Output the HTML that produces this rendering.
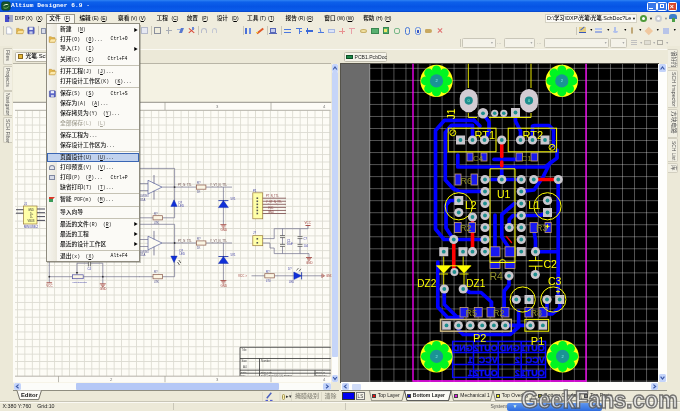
<!DOCTYPE html>
<html><head><meta charset="utf-8"><title>Altium Designer 6.9</title><style>
*{margin:0;padding:0;box-sizing:border-box}
html,body{width:680px;height:411px;overflow:hidden;background:#ECE9D8;font-family:"Liberation Sans","Noto Sans CJK SC",sans-serif;}
body{position:relative;filter:blur(0.3px)}
.a{position:absolute}
.t{position:absolute;white-space:nowrap;font-size:5.7px;line-height:7px;color:#000;font-weight:500}
.mi{position:absolute;left:60px;white-space:nowrap;font-size:5.8px;line-height:8px;color:#000;height:8px;font-weight:500}
.sc{position:absolute;right:0;white-space:nowrap;font-size:5.6px;line-height:8px;color:#111}
.l{font-size:4.9px}
.m{font-family:'Liberation Mono',monospace;font-size:4.72px}
.sep{position:absolute;left:58px;width:80px;height:1px;background:#C5C2B4}
.vt{position:absolute;white-space:nowrap;font-size:5.2px;line-height:7px;color:#555;transform-origin:0 0;transform:rotate(90deg)}
.tb{position:absolute;width:6px;height:7px;border-radius:1px}
svg{position:absolute;left:0;top:0}
</style></head><body>
<div class="a" style="left:0;top:0;width:680px;height:12px;background:linear-gradient(#2F84F3 0,#0D60EA 17%,#0654E4 55%,#0B5CEA 86%,#0843C4 100%)"></div>
<svg width="680" height="411" viewBox="0 0 680 411"><rect x="1.6" y="1.8" width="8.6" height="8.4" rx="1.8" fill="#17552A" stroke="#0C3316" stroke-width="0.5"/><path d="M3 6.6C4.2 3.6 7.4 3.4 8.8 5.4C7.4 4.8 5 5 3 6.6Z" fill="#F4F8D8"/><path d="M3.6 7.8C5.4 8.8 7.6 8.2 8.8 6.4" stroke="#8CCB6A" stroke-width="0.8" fill="none"/></svg>
<div class="t" style="left:11px;top:2px;color:#fff;font-family:'Liberation Mono',monospace;font-weight:bold;font-size:6.2px;letter-spacing:0.05px;line-height:8px">Altium Designer 6.9 -</div>
<div class="a" style="left:647px;top:1.5px;width:9.5px;height:9px;border-radius:1.5px;background:#3A78E8;border:0.6px solid #fff"></div>
<div class="a" style="left:657px;top:1.5px;width:9.5px;height:9px;border-radius:1.5px;background:#3A78E8;border:0.6px solid #fff"></div>
<div class="a" style="left:667.5px;top:1.5px;width:9.5px;height:9px;border-radius:1.5px;background:#D8482C;border:0.6px solid #fff"></div>
<div class="a" style="left:649px;top:7.5px;width:4px;height:1.5px;background:#fff"></div>
<div class="a" style="left:659.5px;top:3.5px;width:4.5px;height:4.5px;border:1px solid #fff"></div>
<div class="t" style="left:669.8px;top:1.5px;color:#fff;font-weight:bold;font-size:7px;line-height:9px">×</div>
<div class="a" style="left:0;top:12px;width:680px;height:12px;background:#EFECDD"></div>
<div class="a" style="left:4.9px;top:14.8px;width:4px;height:6.8px;background:#454CCB"></div><div class="a" style="left:8.9px;top:14.8px;width:3.9px;height:6.8px;background:#A3A9C6"></div><div class="a" style="left:8.3px;top:16.6px;width:0;height:0;border-left:2.2px solid #20246A;border-top:1.6px solid transparent;border-bottom:1.6px solid transparent"></div>
<div class="a" style="left:46px;top:13.5px;width:29px;height:10px;background:#F8F7F1;border:0.7px solid #9A978A;border-bottom:none"></div>
<div class="t" style="left:14.7px;top:14.5px"><span class="l">DXP&nbsp;(X)</span></div>
<div class="t" style="left:36px;top:14.5px"><span class="l">(<u>X</u>)</span></div>
<div class="t" style="left:49.3px;top:14.5px">文件</div>
<div class="t" style="left:64px;top:14.5px"><span class="l">(<u>F</u>)</span></div>
<div class="t" style="left:79.4px;top:14.5px">编辑<span class="l">&nbsp;(E)</span></div>
<div class="t" style="left:100.5px;top:14.5px"><span class="l">(<u>E</u>)</span></div>
<div class="t" style="left:118px;top:14.5px">察看<span class="l">&nbsp;(V)</span></div>
<div class="t" style="left:139px;top:14.5px"><span class="l">(<u>V</u>)</span></div>
<div class="t" style="left:156.5px;top:14.5px">工程</div>
<div class="t" style="left:171.5px;top:14.5px"><span class="l">(<u>C</u>)</span></div>
<div class="t" style="left:186.7px;top:14.5px">放置</div>
<div class="t" style="left:201.7px;top:14.5px"><span class="l">(<u>P</u>)</span></div>
<div class="t" style="left:216.7px;top:14.5px">设计</div>
<div class="t" style="left:231.7px;top:14.5px"><span class="l">(<u>D</u>)</span></div>
<div class="t" style="left:247px;top:14.5px">工具<span class="l">&nbsp;(T)</span></div>
<div class="t" style="left:268px;top:14.5px"><span class="l">(<u>T</u>)</span></div>
<div class="t" style="left:285.5px;top:14.5px">报告<span class="l">&nbsp;(R)</span></div>
<div class="t" style="left:306.5px;top:14.5px"><span class="l">(<u>R</u>)</span></div>
<div class="t" style="left:324.3px;top:14.5px">窗口<span class="l">&nbsp;(W)</span></div>
<div class="t" style="left:346px;top:14.5px"><span class="l">(<u>W</u>)</span></div>
<div class="t" style="left:363.2px;top:14.5px">帮助<span class="l">&nbsp;(H)</span></div>
<div class="t" style="left:384.5px;top:14.5px"><span class="l">(<u>H</u>)</span></div>
<div class="a" style="left:545px;top:13.5px;width:92px;height:9.5px;background:#FBFAF5;border:0.6px solid #D5D2C3"></div>
<div class="t" style="left:547px;top:14.8px;font-size:5.4px">D:\学习\DXP\光笔\光笔.SchDoc?Le</div>
<div class="t" style="left:632px;top:15px;font-size:4px">▼</div>
<div class="a" style="left:640px;top:14.5px;width:7px;height:7px;border-radius:50%;background:#fff;border:2px solid #4E9A3A"></div><div class="t" style="left:649px;top:15px;font-size:4px">▼</div>
<div class="a" style="left:655px;top:14.5px;width:7px;height:7px;border-radius:50%;background:#fff;border:2px solid #C9CCD2"></div><div class="t" style="left:664px;top:15px;font-size:4px;color:#888">▼</div>
<div class="a" style="left:669px;top:14px;width:8px;height:5px;background:#3D7EC8;border-radius:3px 3px 0 0"></div><div class="a" style="left:671.5px;top:18px;width:3px;height:4px;background:#4AA046"></div>
<div class="a" style="left:0;top:24px;width:680px;height:25px;background:#EFECDD"></div>
<div class="a" style="left:2.5px;top:26px;width:1px;height:9px;background:#C9C6B8"></div>
<div class="a" style="left:576px;top:26.5px;width:1px;height:8px;background:#C9C6B8"></div>
<div class="a" style="left:460px;top:39px;width:1px;height:8px;background:#C9C6B8"></div>
<svg width="680" height="411" viewBox="0 0 680 411"><path d="M6.6 27H10.2L11.9 28.8V34H6.6Z" fill="#FDFDFE" stroke="#98A2BA" stroke-width="0.6"/><path d="M10.2 27V28.8H11.9" fill="#DDE3F0" stroke="#98A2BA" stroke-width="0.4"/><path d="M16.6 33.6V28.4H19L19.8 29.3H22.8V33.6Z" fill="#E8B94A" stroke="#B58A30" stroke-width="0.5"/><path d="M16.6 33.6L18.2 30.4H24L22.8 33.6Z" fill="#FBE29A" stroke="#C59A3A" stroke-width="0.5"/><rect x="27.8" y="27.2" width="6.4" height="6.6" rx="0.6" fill="#5560C4" stroke="#3A4296" stroke-width="0.5"/><rect x="29.2" y="27.5" width="3.6" height="2.4" fill="#F2F4FB"/><rect x="29.4" y="31.4" width="3.2" height="2.3" fill="#C9CEEA"/></svg>
<div class="a" style="left:38px;top:26px;width:1px;height:9px;background:#C9C6B8"></div>
<div class="a" style="left:40.6px;top:27.5px;width:5.5px;height:6px;background:#D8DCE8;border:0.5px solid #8890A8"></div>
<div class="a" style="left:121.8px;top:27px;width:5.5px;height:7px;background:#E4E8F4;border:0.5px solid #A0A8C0"></div>
<div class="a" style="left:130.6px;top:27.5px;width:7px;height:6.5px;background:#EAC868;border:0.5px solid #6A83C0"></div>
<div class="a" style="left:133px;top:29px;width:4.5px;height:4px;background:#F6F8FF;border:0.4px solid #7A8AC0"></div>
<div class="a" style="left:141px;top:27px;width:7px;height:7px;background:#E6E8F2;border:0.5px solid #B5BACB"></div>
<div class="a" style="left:151.4px;top:26px;width:1px;height:9px;background:#C9C6B8"></div>
<div class="a" style="left:154.4px;top:27px;width:7px;height:7px;background:transparent;border:0.7px solid #8A8F9C"></div>
<div class="a" style="left:168.3px;top:27px;width:0.8px;height:7px;background:#A8ACB5;"></div>
<div class="a" style="left:165.5px;top:30.2px;width:6.5px;height:0.8px;background:#A8ACB5;"></div>
<div class="a" style="left:176.5px;top:29px;width:6px;height:1px;background:#A0B4E0;"></div>
<div class="a" style="left:180px;top:27.5px;width:2.5px;height:5px;background:#5878D0;transform:skewX(-20deg)"></div>
<div class="a" style="left:187.5px;top:30px;width:7px;height:1.2px;background:#D84838;transform:rotate(40deg)"></div>
<div class="a" style="left:187.5px;top:30px;width:7px;height:1.2px;background:#D84838;transform:rotate(-40deg)"></div>
<div class="a" style="left:192px;top:27px;width:2px;height:3px;background:#6A8AD8;"></div>
<div class="a" style="left:197.6px;top:26px;width:1px;height:9px;background:#C9C6B8"></div>
<div class="a" style="left:201px;top:28px;width:5.5px;height:4.5px;background:transparent;border:1px solid #B8BCCC;border-bottom:none;border-radius:3px 3px 0 0"></div>
<div class="a" style="left:211.8px;top:28px;width:5.5px;height:4.5px;background:transparent;border:1px solid #C4C8D4;border-bottom:none;border-radius:3px 3px 0 0"></div>
<div class="a" style="left:242.6px;top:26px;width:1px;height:9px;background:#C9C6B8"></div>
<div class="a" style="left:245px;top:27.5px;width:2px;height:6px;background:#4A70D8;"></div>
<div class="a" style="left:248.5px;top:27.5px;width:2px;height:6px;background:#6E90E4;"></div>
<div class="a" style="left:255.5px;top:30px;width:8px;height:1.6px;background:#E05828;transform:rotate(-38deg)"></div>
<div class="a" style="left:255.5px;top:32.3px;width:2.5px;height:1.2px;background:#F0C838;"></div>
<div class="a" style="left:266.5px;top:26px;width:1px;height:9px;background:#C9C6B8"></div>
<div class="a" style="left:269.5px;top:28px;width:6px;height:5px;background:#C4CCEC;border:0.6px solid #5868B8"></div>
<div class="a" style="left:269px;top:33px;width:7.5px;height:1px;background:#5868B8;"></div>
<div class="a" style="left:281px;top:26px;width:1px;height:9px;background:#C9C6B8"></div>
<div class="a" style="left:284px;top:29px;width:7px;height:1.1px;background:#4A78E0;"></div>
<div class="a" style="left:284px;top:31.5px;width:7px;height:1.1px;background:#4A78E0;"></div>
<div class="a" style="left:295.6px;top:28px;width:6px;height:1.2px;background:#4A78E0;"></div>
<div class="a" style="left:298.5px;top:28px;width:1.2px;height:6px;background:#4A78E0;"></div>
<div class="a" style="left:299px;top:30.5px;width:3px;height:1px;background:#4A78E0;"></div>
<div class="a" style="left:306px;top:30px;width:7px;height:1.6px;background:#3A68D8;"></div>
<div class="a" style="left:307px;top:27.5px;width:1.2px;height:6px;background:#3A68D8;"></div>
<div class="a" style="left:317.6px;top:32px;width:6px;height:1.2px;background:#4A78E0;"></div>
<div class="a" style="left:319.5px;top:27.5px;width:1.2px;height:5px;background:#4A78E0;transform:skewX(15deg)"></div>
<div class="a" style="left:328px;top:28.5px;width:7px;height:4.5px;background:#DCE4F8;border:0.5px solid #A8B8E4"></div>
<div class="a" style="left:341.5px;top:28px;width:1.2px;height:6px;background:#E89090;"></div>
<div class="a" style="left:338.8px;top:30.5px;width:6.5px;height:1.2px;background:#E89090;"></div>
<div class="a" style="left:348.5px;top:28px;width:6.2px;height:1.1px;background:#E8A0A8;"></div>
<div class="a" style="left:351px;top:28px;width:1.1px;height:6px;background:#E8A0A8;"></div>
<div class="a" style="left:360px;top:28.5px;width:7px;height:4.5px;background:#F0E0A0;border-radius:50%;border:0.5px solid #C8B068"></div>
<div class="a" style="left:371px;top:27.6px;width:7.6px;height:6px;background:#58B070;border:0.5px solid #3A8850"></div>
<div class="a" style="left:382.8px;top:27.2px;width:6.4px;height:7px;background:#58B070;border:0.5px solid #3A8850"></div>
<div class="a" style="left:384.3px;top:28.8px;width:2.8px;height:2.8px;background:#F0E868;"></div>
<div class="a" style="left:393.5px;top:28px;width:6px;height:5.5px;background:transparent;border:0.7px solid #78B888;border-radius:2px"></div>
<div class="a" style="left:404.5px;top:27px;width:5px;height:8px;background:transparent;border:1px solid #4878D8;border-radius:2.5px"></div>
<div class="a" style="left:415px;top:27px;width:5.5px;height:8px;background:transparent;border:1px solid #6890E0;border-radius:2.5px"></div>
<div class="a" style="left:416.7px;top:30px;width:2px;height:3px;background:#3858C8;"></div>
<div class="a" style="left:425.3px;top:28.5px;width:7px;height:4.5px;background:#C8A860;border-radius:2px 3px 3px 2px"></div>
<div class="a" style="left:437px;top:30.2px;width:6px;height:1px;background:#E07070;transform:rotate(45deg)"></div>
<div class="a" style="left:437px;top:30.2px;width:6px;height:1px;background:#E07070;transform:rotate(-45deg)"></div>
<div class="a" style="left:578.5px;top:27px;width:7px;height:6px;background:#E8D080;border-bottom:1.2px solid #3858B8"></div>
<div class="a" style="left:580px;top:27.5px;width:5px;height:1.2px;background:#4868C8;transform:rotate(-40deg)"></div>
<div class="a" style="left:595px;top:28px;width:6.5px;height:2px;background:#B8C8F0;"></div>
<div class="a" style="left:595px;top:31px;width:6.5px;height:2px;background:#DCE4F8;border:0.4px solid #A0B0E0"></div>
<div class="a" style="left:614px;top:27px;width:2px;height:5px;background:#B0C0EC;"></div>
<div class="a" style="left:612.5px;top:31px;width:5px;height:2px;background:#B0C0EC;border-radius:0 0 3px 3px"></div>
<div class="a" style="left:631px;top:27px;width:2px;height:7px;background:#E8D8B0;border:0.4px solid #C0A878;border-radius:1px"></div>
<div class="a" style="left:645.5px;top:28px;width:5.5px;height:5.5px;background:#F0C8A0;transform:rotate(45deg)"></div>
<div class="a" style="left:662.5px;top:27.5px;width:6.5px;height:6.5px;background:#B8C4E8;"></div>
<div class="t" style="left:589.5px;top:27px;font-size:3.6px">▼</div>
<div class="t" style="left:606.5px;top:27px;font-size:3.6px">▼</div>
<div class="t" style="left:623.5px;top:27px;font-size:3.6px">▼</div>
<div class="t" style="left:638.5px;top:27px;font-size:3.6px">▼</div>
<div class="t" style="left:656px;top:27px;font-size:3.6px">▼</div>
<div class="t" style="left:673px;top:27px;font-size:3.6px">▼</div>
<div class="a" style="left:462px;top:38px;width:33.8px;height:9.5px;background:#F4F2E9;border:0.7px solid #C9C6B8;border-radius:1.5px"></div>
<div class="t" style="left:490.3px;top:39.5px;font-size:3.4px;color:#AAA">▼</div>
<div class="a" style="left:504.2px;top:38px;width:31px;height:9.5px;background:#F4F2E9;border:0.7px solid #C9C6B8;border-radius:1.5px"></div>
<div class="t" style="left:529.7px;top:39.5px;font-size:3.4px;color:#AAA">▼</div>
<div class="a" style="left:544px;top:38px;width:65.4px;height:9.5px;background:#F4F2E9;border:0.7px solid #C9C6B8;border-radius:1.5px"></div>
<div class="t" style="left:603.9px;top:39.5px;font-size:3.4px;color:#AAA">▼</div>
<div class="a" style="left:610.2px;top:38px;width:17px;height:9.5px;background:#F4F2E9;border:0.7px solid #C9C6B8;border-radius:1.5px"></div>
<div class="t" style="left:621.7px;top:39.5px;font-size:3.4px;color:#AAA">▼</div>
<div class="t" style="left:497px;top:38.5px;font-size:5px;color:#999">...</div>
<div class="t" style="left:537px;top:38.5px;font-size:5px;color:#999">...</div>
<div class="a" style="left:631px;top:40px;width:6px;height:1px;background:#C0C0C0;"></div>
<div class="a" style="left:631px;top:42px;width:6px;height:1px;background:#C0C0C0;"></div>
<div class="a" style="left:631px;top:44px;width:6px;height:1px;background:#C0C0C0;"></div>
<div class="a" style="left:644px;top:40px;width:7px;height:5px;background:#E0DED4;border:0.5px solid #C8C5B8"></div>
<div class="a" style="left:656.5px;top:40px;width:6px;height:5px;background:transparent;border:0.7px dashed #B0AEA4"></div>
<div class="t" style="left:639.5px;top:39.5px;font-size:3.4px;color:#AAA">▼</div>
<div class="t" style="left:652.5px;top:39.5px;font-size:3.4px;color:#AAA">▼</div>
<div class="t" style="left:665.5px;top:39.5px;font-size:3.4px;color:#AAA">▼</div>
<div class="a" style="left:0;top:48.6px;width:680px;height:0.8px;background:#CFCCBD"></div><div class="a" style="left:0;top:49.4px;width:680px;height:0.8px;background:#FAF9F3"></div>
<div class="a" style="left:0;top:50px;width:680px;height:361px;background:#ECE9D8"></div>
<!--PANES--><div class="a" style="left:0;top:46px;width:12.5px;height:345px;background:#ECE9D8"></div>
<div class="a" style="left:2.5px;top:47.5px;width:9.5px;height:17.5px;background:#F2F0E4;border:0.6px solid #CECBBC;border-right:none;border-radius:2px 0 0 2px"></div>
<div class="vt" style="left:10.5px;top:49.7px">Files</div>
<div class="a" style="left:2.5px;top:66px;width:9.5px;height:24.5px;background:#F2F0E4;border:0.6px solid #CECBBC;border-right:none;border-radius:2px 0 0 2px"></div>
<div class="vt" style="left:10.5px;top:68.2px">Projects</div>
<div class="a" style="left:2.5px;top:91px;width:9.5px;height:25px;background:#F2F0E4;border:0.6px solid #CECBBC;border-right:none;border-radius:2px 0 0 2px"></div>
<div class="vt" style="left:10.5px;top:93.2px">Navigator</div>
<div class="a" style="left:2.5px;top:116.5px;width:9.5px;height:26.5px;background:#F2F0E4;border:0.6px solid #CECBBC;border-right:none;border-radius:2px 0 0 2px"></div>
<div class="vt" style="left:10.5px;top:118.7px">SCH Filter</div>
<div class="a" style="left:14.5px;top:52px;width:60px;height:9.5px;background:#FCFBF7;border:0.6px solid #B9B6A7;border-radius:1.5px"></div>
<div class="a" style="left:17.5px;top:54px;width:5.5px;height:5px;background:#E8B838;border:0.6px solid #8A6A20"></div>
<div class="t" style="left:25.5px;top:53.3px;font-size:5.8px">光笔.SchDoc</div>
<div class="a" style="left:12.6px;top:63px;width:318.9px;height:319.5px;background:#F4F2E3;border-top:0.8px solid #B8B5A6"></div>
<svg width="680" height="411" viewBox="0 0 680 411" style="font-family:'Liberation Sans',sans-serif">
<defs><clipPath id="cs"><rect x="12.6" y="63.8" width="318.9" height="318.7"/></clipPath>
<pattern id="gs" x="16.95" y="109.8" width="7.44" height="7.39" patternUnits="userSpaceOnUse"><rect width="7.44" height="7.39" fill="#FDFCF6"/><path d="M0.45 0V7.5M0 0.45H7.5" stroke="#DCDBD2" stroke-width="0.9" fill="none"/></pattern></defs>
<g clip-path="url(#cs)">
<rect x="13" y="102" width="318.5" height="280.5" fill="#FDFCF7"/>
<rect x="15" y="110.2" width="315.2" height="266.1" fill="url(#gs)"/>
<path d="M13 102.3H331.5" stroke="#77756C" stroke-width="0.8" fill="none"/><path d="M15 110.3H330.4M15 376.2H330.4" stroke="#A9A79E" stroke-width="0.8" fill="none"/>
<path d="M330.2 110V376" stroke="#B5B3AA" stroke-width="0.6" fill="none"/>
<path d="M58.5 102.3V110M165 102.3V110M271 102.3V110M58.5 376.2V382.4M165 376.2V382.4M271 376.2V382.4" stroke="#8E8C82" stroke-width="0.6"/>
<text x="110" y="107.6" font-size="4.2" fill="#777">2</text>
<text x="216" y="107.6" font-size="4.2" fill="#777">3</text>
<text x="323" y="107.6" font-size="4.2" fill="#777">4</text>
<text x="110" y="381.3" font-size="4.2" fill="#777">2</text>
<text x="216" y="381.3" font-size="4.2" fill="#777">3</text>
<text x="323" y="381.3" font-size="4.2" fill="#777">4</text>
<rect x="23.4" y="206" width="13.6" height="18" fill="#FFFFA8" stroke="#9A7A3A" stroke-width="0.7"/>
<path d="M16 209.7H23.4M16 213.2H23.4" stroke="#4A4A5A" stroke-width="1" fill="none"/>
<path d="M37 209H45M37 212.7H45M37 216.6H45M37 220.4H45" stroke="#4A4A5A" stroke-width="1" fill="none"/>
<text x="28" y="210.7" font-size="2.6" fill="#333">GND</text>
<text x="30" y="214.5" font-size="2.6" fill="#333">D+</text>
<text x="30" y="218" font-size="2.6" fill="#333">D-</text>
<text x="27.5" y="221.8" font-size="2.6" fill="#333">VBUS</text>
<text x="24" y="228.3" font-size="2.8" fill="#3838A0">MINIUSB-2</text>
<text x="24" y="204.8" font-size="2.8" fill="#3838A0">J1</text>
<path d="M139 168.4H174.6V217.8H139" stroke="#70708C" stroke-width="0.7" fill="none"/>
<path d="M139 183.6H148M139 190.6H148" stroke="#70708C" stroke-width="0.7" fill="none"/>
<path d="M148 180.3L162 187.1L148 194Z" fill="#FCFBF2" stroke="#6068A0" stroke-width="0.75"/>
<path d="M154 175V183.5M154 190.8V199.5" stroke="#55557A" stroke-width="0.7" fill="none"/>
<path d="M162 187.1H196.4M205.8 187.1H232" stroke="#70708C" stroke-width="0.7" fill="none"/>
<rect x="196.4" y="185.0" width="9.5" height="4.2" fill="#FBF6E4" stroke="#8A5A4A" stroke-width="0.7"/>
<rect x="153" y="215.70000000000002" width="9.5" height="4.2" fill="#FBF6E4" stroke="#8A5A4A" stroke-width="0.7"/>
<text x="178" y="185.8" font-size="2.8" fill="#6A4A4A">PT_N_TTL</text>
<text x="210" y="185.8" font-size="2.8" fill="#6A4A4A">Y_VT_N_TTL</text>
<text x="197" y="183.6" font-size="2.8" fill="#4A4A8A">R?</text>
<text x="197" y="193" font-size="2.8" fill="#4A4A8A">1K</text>
<text x="140" y="197" font-size="2.8" fill="#4A4A8A">LM393</text>
<text x="140" y="200.5" font-size="2.8" fill="#4A4A8A">U1A</text>
<text x="154" y="214.5" font-size="2.8" fill="#4A4A8A">R?</text>
<text x="154" y="223.6" font-size="2.8" fill="#4A4A8A">47K</text>
<circle cx="174.6" cy="187.1" r="0.9" fill="#333"/>
<path d="M139 224.3H174.6V276.7H139" stroke="#70708C" stroke-width="0.7" fill="none"/>
<path d="M139 239.5H148M139 246.5H148" stroke="#70708C" stroke-width="0.7" fill="none"/>
<path d="M148 236.20000000000002L162 243.0L148 249.9Z" fill="#FCFBF2" stroke="#6068A0" stroke-width="0.75"/>
<path d="M154 230.9V239.4M154 246.70000000000002V255.4" stroke="#55557A" stroke-width="0.7" fill="none"/>
<path d="M162 243.0H196.4M205.8 243.0H232" stroke="#70708C" stroke-width="0.7" fill="none"/>
<rect x="196.4" y="240.9" width="9.5" height="4.2" fill="#FBF6E4" stroke="#8A5A4A" stroke-width="0.7"/>
<rect x="153" y="274.59999999999997" width="9.5" height="4.2" fill="#FBF6E4" stroke="#8A5A4A" stroke-width="0.7"/>
<text x="178" y="241.70000000000002" font-size="2.8" fill="#6A4A4A">PT_N_TTL</text>
<text x="210" y="241.70000000000002" font-size="2.8" fill="#6A4A4A">Y_VT_N_TTL</text>
<text x="197" y="239.5" font-size="2.8" fill="#4A4A8A">R?</text>
<text x="197" y="248.9" font-size="2.8" fill="#4A4A8A">1K</text>
<text x="140" y="252.9" font-size="2.8" fill="#4A4A8A">LM393</text>
<text x="140" y="256.4" font-size="2.8" fill="#4A4A8A">U1A</text>
<text x="154" y="273.4" font-size="2.8" fill="#4A4A8A">R?</text>
<text x="154" y="282.5" font-size="2.8" fill="#4A4A8A">47K</text>
<circle cx="174.6" cy="243.0" r="0.9" fill="#333"/>
<path d="M49.3 255V282.8M49.3 276.7H72.5M83.2 276.7H139.5M77 263.2H88.4M90.4 263.2H102.8V283.8M77 263.2V272" stroke="#70708C" stroke-width="0.7" fill="none"/>
<path d="M88.4 260V266.4M90.4 260V266.4" stroke="#444" stroke-width="0.7" fill="none"/>
<rect x="72.5" y="274.8" width="10.7" height="3.9" fill="#FBF6E4" stroke="#4A4AA0" stroke-width="0.7"/>
<path d="M75.8 272L77 274.6L78.2 272Z" fill="#333"/>
<text x="72.5" y="282.6" font-size="2.4" fill="#3838A0">potentiometer</text>
<text x="87.6" y="270.2" font-size="2.8" fill="#3838A0">C4</text>
<path d="M99.8 283.8H105.8M100.8 285.1H104.8M101.8 286.40000000000003H103.8" stroke="#A0403A" stroke-width="0.8" fill="none"/>
<text x="99.8" y="290.1" font-size="3" fill="#A0403A">GND</text>
<path d="M46.5 282.8H52.1" stroke="#A0403A" stroke-width="0.9" fill="none"/>
<text x="46.3" y="287.2" font-size="3" fill="#A0403A">VCC</text>
<circle cx="49.3" cy="276.7" r="0.9" fill="#333"/><circle cx="102.8" cy="276.7" r="0.9" fill="#333"/>
<path d="M174 199.8L170.8 206.4H177.2Z" fill="#1030D8" stroke="#0820A0" stroke-width="0.4"/>
<text x="178.5" y="203.5" font-size="2.8" fill="#3838A0">D?</text>
<text x="178.5" y="207" font-size="2.8" fill="#3838A0">LED</text>
<path d="M174 262.6L170.8 256.1H177.2Z" fill="#1030D8" stroke="#0820A0" stroke-width="0.4"/>
<text x="179.5" y="251.8" font-size="2.8" fill="#3838A0">D?</text>
<text x="179.5" y="255.3" font-size="2.8" fill="#3838A0">LED</text>
<path d="M177.5 262L179.5 265M178.8 260L180.8 263" stroke="#222" stroke-width="0.7" fill="none"/>
<path d="M223.4 187.1V224.6" stroke="#70708C" stroke-width="0.7" fill="none"/>
<path d="M223.4 200.6L218.4 207.6H228.4Z" fill="#1030D8" stroke="#0820A0" stroke-width="0.4"/>
<path d="M218.4 200.6H228.4" stroke="#0820A0" stroke-width="0.8" fill="none"/>
<path d="M220.4 224.6H226.4M221.4 225.9H225.4M222.4 227.2H224.4" stroke="#A0403A" stroke-width="0.8" fill="none"/>
<text x="220.4" y="230.9" font-size="3" fill="#A0403A">GND</text>
<text x="230.5" y="200" font-size="2.8" fill="#3838A0">5V1</text>
<path d="M223.4 243.0V280.5" stroke="#70708C" stroke-width="0.7" fill="none"/>
<path d="M223.4 256.5L218.4 263.5H228.4Z" fill="#1030D8" stroke="#0820A0" stroke-width="0.4"/>
<path d="M218.4 256.5H228.4" stroke="#0820A0" stroke-width="0.8" fill="none"/>
<path d="M220.4 280.5H226.4M221.4 281.8H225.4M222.4 283.1H224.4" stroke="#A0403A" stroke-width="0.8" fill="none"/>
<text x="220.4" y="286.8" font-size="3" fill="#A0403A">GND</text>
<text x="230.5" y="255.9" font-size="2.8" fill="#3838A0">5V1</text>
<rect x="252.8" y="192.8" width="9.9" height="26" fill="#FFFFA8" stroke="#9A7A3A" stroke-width="0.7"/>
<path d="M262.7 198.2H286" stroke="#7A4A4A" stroke-width="0.8" fill="none"/>
<rect x="256.5" y="197.39999999999998" width="1.6" height="1.6" fill="#555"/>
<path d="M262.7 201.26H286" stroke="#7A4A4A" stroke-width="0.8" fill="none"/>
<rect x="256.5" y="200.45999999999998" width="1.6" height="1.6" fill="#555"/>
<path d="M262.7 204.32H286" stroke="#7A4A4A" stroke-width="0.8" fill="none"/>
<rect x="256.5" y="203.51999999999998" width="1.6" height="1.6" fill="#555"/>
<path d="M262.7 207.38H286" stroke="#7A4A4A" stroke-width="0.8" fill="none"/>
<rect x="256.5" y="206.57999999999998" width="1.6" height="1.6" fill="#555"/>
<path d="M262.7 210.44H286" stroke="#7A4A4A" stroke-width="0.8" fill="none"/>
<rect x="256.5" y="209.64" width="1.6" height="1.6" fill="#555"/>
<path d="M262.7 213.5H286" stroke="#7A4A4A" stroke-width="0.8" fill="none"/>
<rect x="256.5" y="212.7" width="1.6" height="1.6" fill="#555"/>
<text x="266" y="197" font-size="2.6" fill="#8A3A3A">PT_N_TTL</text>
<text x="266" y="203.2" font-size="2.6" fill="#8A3A3A">Y_VT_N_TTL</text>
<text x="268" y="209.4" font-size="2.6" fill="#8A3A3A">VCC</text>
<text x="268" y="212.5" font-size="2.6" fill="#8A3A3A">GND</text>
<text x="253" y="191.5" font-size="2.8" fill="#3838A0">P1</text>
<rect x="252.8" y="235.7" width="9.9" height="10" fill="#FFFFA8" stroke="#9A7A3A" stroke-width="0.7"/>
<text x="253" y="234.4" font-size="2.8" fill="#3838A0">J?</text>
<rect x="256.5" y="238" width="1.6" height="1.6" fill="#555"/><rect x="256.5" y="242" width="1.6" height="1.6" fill="#555"/>
<path d="M262.7 238.6H274.2M262.7 243H270V248H274.2M274.2 228.7V238.6M274.2 248V253.6M274.2 228.7H308V225.5M274.2 253.6H309V257.5" stroke="#70708C" stroke-width="0.7" fill="none"/>
<path d="M282.5 228.7V235.6M282.5 237.6V244.4M282.5 246.4V253.6M300 228.7V236.6M300 238.6V244.4M300 246.4V253.6" stroke="#70708C" stroke-width="0.7" fill="none"/>
<path d="M280 235.6H285M280 237.6H285M280 244.4H285M280 246.4H285M297.5 236.6H302.5M297.5 238.6H302.5M297.5 244.4H302.5M297.5 246.4H302.5" stroke="#444" stroke-width="0.7" fill="none"/>
<path d="M305.5 225.5H310.5" stroke="#A0403A" stroke-width="0.9" fill="none"/>
<text x="304.5" y="224.2" font-size="3" fill="#A0403A">VCC</text>
<path d="M306 257.5H312M307 258.8H311M308 260.1H310" stroke="#A0403A" stroke-width="0.8" fill="none"/>
<text x="306" y="263.8" font-size="3" fill="#A0403A">GND</text>
<text x="287" y="241.5" font-size="2.8" fill="#3838A0">C1</text>
<text x="287" y="245" font-size="2.6" fill="#3838A0">10uF</text>
<text x="303.5" y="239.5" font-size="2.8" fill="#3838A0">C?</text>
<text x="303.5" y="246.5" font-size="2.6" fill="#3838A0">104</text>
<path d="M251.5 275.8H264.8M274.3 275.8H293.8M301.6 275.8H322" stroke="#70708C" stroke-width="0.7" fill="none"/>
<rect x="264.8" y="273.7" width="9.5" height="4.2" fill="#FBF6E4" stroke="#8A5A4A" stroke-width="0.7"/>
<path d="M301.6 275.8L293.8 272V279.6Z" fill="#1030D8" stroke="#0820A0" stroke-width="0.4"/>
<path d="M301.6 272.2V279.4" stroke="#0820A0" stroke-width="0.8" fill="none"/>
<path d="M296.5 270.5L298.5 268M299 271.3L301 268.8" stroke="#222" stroke-width="0.6" fill="none"/>
<text x="238" y="277" font-size="3" fill="#A0403A">VCC &gt;</text>
<path d="M322 273.5V278M323.3 274.5V277M324.6 275.3V276.3" stroke="#A0403A" stroke-width="0.8" fill="none"/>
<text x="326" y="277" font-size="3" fill="#A0403A">GND</text>
<text x="266" y="273" font-size="2.8" fill="#3838A0">R?</text>
<text x="266" y="281.7" font-size="2.6" fill="#3838A0">470</text>
<text x="288" y="269.5" font-size="2.8" fill="#3838A0">D?</text>
<text x="289" y="283.4" font-size="2.6" fill="#3838A0">LED</text>
<path d="M240 347.3H330.8M240 358.5H330.8M240 370.2H330.8M240 373.2H330.8M240 347.3V376M259.5 358.5V370.2M259.5 370.2V376M315 370.2V376" stroke="#333" stroke-width="0.8" fill="none"/>
<text x="241.5" y="350.6" font-size="2.7" fill="#444">Title</text>
<text x="241.5" y="361.6" font-size="2.7" fill="#444">Size</text>
<text x="243" y="367.8" font-size="2.9" fill="#444">A4</text>
<text x="261" y="361.6" font-size="2.7" fill="#444">Number</text>
<text x="241" y="372.6" font-size="2.4" fill="#444">Date:</text>
<text x="261" y="372.6" font-size="2.4" fill="#444">2009-8-25</text>
<text x="316" y="372.6" font-size="2.4" fill="#444">Sheet  of</text>
<text x="241" y="375.6" font-size="2.4" fill="#444">File:</text>
<text x="261" y="375.6" font-size="2.4" fill="#444">D:\学习\DXP\光笔\光笔.SchDoc</text>
<text x="316" y="375.6" font-size="2.4" fill="#444">Drawn By:</text>
</g></svg>
<div class="a" style="left:331.8px;top:63.8px;width:6.4px;height:318.7px;background:#FDFDFB"></div>
<div class="a" style="left:331.8px;top:72px;width:6.4px;height:285px;background:#C6D5F8;border-radius:1px"></div>
<div class="a" style="left:331.8px;top:64.2px;width:6.4px;height:7.6px;background:#C4D4FA;border-radius:1.5px"></div>
<div class="a" style="left:331.8px;top:374.6px;width:6.4px;height:7.6px;background:#C4D4FA;border-radius:1.5px"></div>
<svg width="680" height="411" viewBox="0 0 680 411"><path d="M333.2 69.5L335 67L336.8 69.5M333.2 377L335 379.5L336.8 377" stroke="#3C5AA8" stroke-width="1.2" fill="none"/></svg>
<div class="a" style="left:13.8px;top:382.6px;width:317.7px;height:7.6px;background:#FCFCF9"></div>
<div class="a" style="left:76px;top:382.8px;width:202.5px;height:7.2px;background:#B5C8F6;border-radius:1px"></div>
<div class="a" style="left:13.8px;top:382.8px;width:7.6px;height:7.2px;background:#C4D4FA;border-radius:1.5px"></div>
<div class="a" style="left:323.2px;top:382.8px;width:7.6px;height:7.2px;background:#C4D4FA;border-radius:1.5px"></div>
<svg width="680" height="411" viewBox="0 0 680 411"><path d="M18.6 384.6L16.4 386.4L18.6 388.2M326 384.6L328.2 386.4L326 388.2" stroke="#3C5AA8" stroke-width="1.2" fill="none"/></svg>
<div class="a" style="left:331.5px;top:382.6px;width:7px;height:8px;background:#ECE9D8"></div>
<div class="a" style="left:13px;top:390.4px;width:326px;height:0.7px;background:#8F8D80"></div>
<svg width="680" height="411" viewBox="0 0 680 411"><path d="M17 390.6L19.8 399.6H38.6L41.4 390.6" fill="#FCFBF7" stroke="#55534A" stroke-width="0.8"/></svg>
<div class="t" style="left:21px;top:391.6px;font-weight:bold;font-size:5.8px;color:#111">Editor</div>
<svg width="680" height="411" viewBox="0 0 680 411"><path d="M266.8 398.2L271.3 392.8" stroke="#4A60C0" stroke-width="1.5"/><path d="M265.5 400.4H268M270 400.4H272.5" stroke="#2838D0" stroke-width="0.9"/><path d="M262.5 392V401.5M280 392V401.5M291.5 392V401.5M321.5 392V401.5" stroke="#D5D2C2" stroke-width="0.7"/></svg>
<div class="a" style="left:282px;top:393.5px;width:3px;height:6.5px;background:#F8F0B8;border:0.5px solid #A89850;border-radius:1.5px"></div>
<div class="t" style="left:285.5px;top:393px;font-size:5px;color:#333">▸▾</div>
<div class="t" style="left:295px;top:393.2px;font-size:6px;color:#8A887C">掩膜级别</div>
<div class="t" style="left:324.5px;top:393.2px;font-size:6px;color:#8A887C">清除</div><div class="a" style="left:343.5px;top:52px;width:43px;height:10px;background:#F6F4EA;border:0.6px solid #C2BFB0;border-radius:1.5px"></div>
<div class="a" style="left:346px;top:54.5px;width:6.5px;height:4.5px;background:#1E8A48;border:0.5px solid #0E5028"></div>
<div class="t" style="left:354.5px;top:53.6px;font-size:5.1px;color:#222">PCB1.PcbDoc</div>
<div class="a" style="left:340.2px;top:63px;width:318.4px;height:319.6px;background:#6B6B6B;border-top:0.8px solid #55534A;border-left:0.8px solid #55534A"></div>
<svg width="680" height="411" viewBox="0 0 680 411" style="font-family:'Liberation Sans',sans-serif">
<defs><clipPath id="cp"><rect x="341.4" y="63.8" width="316.8" height="318.4"/></clipPath></defs>
<g clip-path="url(#cp)">
<rect x="370" y="63.8" width="288.4" height="318.6" fill="#000"/>
<path d="M369.87 63.8V382.4M381.90 63.8V382.4M393.93 63.8V382.4M405.96 63.8V382.4M417.99 63.8V382.4M430.02 63.8V382.4M442.05 63.8V382.4M454.08 63.8V382.4M466.11 63.8V382.4M478.14 63.8V382.4M490.17 63.8V382.4M502.20 63.8V382.4M514.23 63.8V382.4M526.26 63.8V382.4M538.29 63.8V382.4M550.32 63.8V382.4M562.35 63.8V382.4M574.38 63.8V382.4M586.41 63.8V382.4M598.44 63.8V382.4M610.47 63.8V382.4M622.50 63.8V382.4M634.53 63.8V382.4M646.56 63.8V382.4" stroke="#fff" stroke-opacity="0.31" stroke-width="1" fill="none"/><path d="M370 68.35H658.4M370 80.38H658.4M370 92.41H658.4M370 104.44H658.4M370 116.47H658.4M370 128.50H658.4M370 140.53H658.4M370 152.56H658.4M370 164.59H658.4M370 176.62H658.4M370 188.65H658.4M370 200.68H658.4M370 212.71H658.4M370 224.74H658.4M370 236.77H658.4M370 248.80H658.4M370 260.83H658.4M370 272.86H658.4M370 284.89H658.4M370 296.92H658.4M370 308.95H658.4M370 320.98H658.4M370 333.01H658.4M370 345.04H658.4M370 357.07H658.4M370 369.10H658.4M370 381.13H658.4" stroke="#fff" stroke-opacity="0.31" stroke-width="1" fill="none"/>
<path d="M413 60V381H586V60" stroke="#FF00FF" stroke-width="1.3" fill="none"/>
<path d="M474 120.3H444.5L435.5 130.5V229L444 239.5H453.75" stroke="#0000FF" stroke-width="3.7" fill="none" stroke-linejoin="round" stroke-linecap="round"/>
<path d="M474 120.3L480 126" stroke="#0000FF" stroke-width="3.7" fill="none" stroke-linejoin="round" stroke-linecap="round"/>
<path d="M472.5 140V125.3H451.5L445.3 132.5V180L453 188.5L459 191.4H485" stroke="#0000FF" stroke-width="3.7" fill="none" stroke-linejoin="round" stroke-linecap="round"/>
<path d="M458.75 200.5H450L446 205V228L453.75 239.5" stroke="#0000FF" stroke-width="3.7" fill="none" stroke-linejoin="round" stroke-linecap="round"/>
<path d="M483 113.5L489 122V132L484.5 140" stroke="#0000FF" stroke-width="3.7" fill="none" stroke-linejoin="round" stroke-linecap="round"/>
<path d="M515.5 113V121L520.5 131V140" stroke="#0000FF" stroke-width="3.7" fill="none" stroke-linejoin="round" stroke-linecap="round"/>
<path d="M534 125.5H549L553.5 130V146" stroke="#0000FF" stroke-width="3.7" fill="none" stroke-linejoin="round" stroke-linecap="round"/>
<path d="M532.5 140V126" stroke="#0000FF" stroke-width="3.7" fill="none" stroke-linejoin="round" stroke-linecap="round"/>
<path d="M457.8 155V167H545L557 158V150" stroke="#0000FF" stroke-width="3.7" fill="none" stroke-linejoin="round" stroke-linecap="round"/>
<path d="M494 159.3H519" stroke="#0000FF" stroke-width="3.7" fill="none" stroke-linejoin="round" stroke-linecap="round"/>
<path d="M501.75 168V179.5" stroke="#0000FF" stroke-width="3.7" fill="none" stroke-linejoin="round" stroke-linecap="round"/>
<path d="M485 179.5H521" stroke="#0000FF" stroke-width="3.7" fill="none" stroke-linejoin="round" stroke-linecap="round"/>
<path d="M550 163L543 177L534 190L521.25 191.5" stroke="#0000FF" stroke-width="3.7" fill="none" stroke-linejoin="round" stroke-linecap="round"/>
<path d="M495 215V251.75" stroke="#0000FF" stroke-width="3.7" fill="none" stroke-linejoin="round" stroke-linecap="round"/>
<path d="M514.5 203.5L501.8 214.5V237L508 246.5L510 251.75" stroke="#0000FF" stroke-width="3.7" fill="none" stroke-linejoin="round" stroke-linecap="round"/>
<path d="M521.25 215.5H513L509.25 219.5V227.5" stroke="#0000FF" stroke-width="3.7" fill="none" stroke-linejoin="round" stroke-linecap="round"/>
<path d="M547.5 212.5L540 215.5H521.25" stroke="#0000FF" stroke-width="3.7" fill="none" stroke-linejoin="round" stroke-linecap="round"/>
<path d="M453.75 239.5H485" stroke="#0000FF" stroke-width="3.7" fill="none" stroke-linejoin="round" stroke-linecap="round"/>
<path d="M535.5 251.75H557.5" stroke="#0000FF" stroke-width="3.7" fill="none" stroke-linejoin="round" stroke-linecap="round"/>
<path d="M558.2 179.5V296" stroke="#0000FF" stroke-width="3.7" fill="none" stroke-linejoin="round" stroke-linecap="round"/>
<path d="M533.75 230L535.5 240V251.75" stroke="#0000FF" stroke-width="3.7" fill="none" stroke-linejoin="round" stroke-linecap="round"/>
<path d="M444.3 289V304.5L457 317H462" stroke="#0000FF" stroke-width="3.7" fill="none" stroke-linejoin="round" stroke-linecap="round"/>
<path d="M463.2 289L470 292.5H481L491.5 302V310" stroke="#0000FF" stroke-width="3.7" fill="none" stroke-linejoin="round" stroke-linecap="round"/>
<path d="M437.8 262V307L447.5 317.5H462" stroke="#0000FF" stroke-width="3.7" fill="none" stroke-linejoin="round" stroke-linecap="round"/>
<path d="M509 275.8V285L504.2 291V311" stroke="#0000FF" stroke-width="3.7" fill="none" stroke-linejoin="round" stroke-linecap="round"/>
<path d="M458.5 325.4V330L463 334.5H510L518.6 327V311" stroke="#0000FF" stroke-width="3.7" fill="none" stroke-linejoin="round" stroke-linecap="round"/>
<path d="M507 325.4H530.3" stroke="#0000FF" stroke-width="3.7" fill="none" stroke-linejoin="round" stroke-linecap="round"/>
<path d="M547 299.5V309" stroke="#0000FF" stroke-width="3.7" fill="none" stroke-linejoin="round" stroke-linecap="round"/>
<path d="M559.7 299.5V308L552 314H545" stroke="#0000FF" stroke-width="3.7" fill="none" stroke-linejoin="round" stroke-linecap="round"/>
<g stroke="#0808FF" fill="none" stroke-width="1.5"><rect x="452.7" y="341.4" width="92.8" height="36"/><path d="M452.7 352.6H545.5M452.7 364.6H545.5M473.5 341.4V377.4M498.2 341.4V377.4M521.2 341.4V377.4"/></g>
<g transform="translate(998.2 0) scale(-1 1)" font-size="9" font-weight="bold" fill="#0C0CFF" stroke="#0C0CFF" stroke-width="0.35">
<text x="453.5" y="351">OUT1</text>
<text x="478.5" y="351">GND</text>
<text x="500.5" y="351">OUT2</text>
<text x="525.5" y="351">GND</text>
<text x="453.5" y="363.2">VCC</text>
<text x="478.5" y="363.2">2</text>
<text x="500.5" y="363.2">VCC</text>
<text x="525.5" y="363.2">1</text>
<text x="453.5" y="375.8">OUT1</text>
<text x="478.5" y="375.8">2</text>
<text x="500.5" y="375.8">OUT2</text>
<text x="525.5" y="375.8">1</text>
</g>
<path d="M501.75 144.5V156.5" stroke="#FF0000" stroke-width="3.6" fill="none" stroke-linejoin="round" stroke-linecap="round"/>
<path d="M501.75 162V166" stroke="#FF0000" stroke-width="3.6" fill="none" stroke-linejoin="round" stroke-linecap="round"/>
<path d="M538.5 179.5H553.5" stroke="#FF0000" stroke-width="3.6" fill="none" stroke-linejoin="round" stroke-linecap="round"/>
<path d="M453.75 244.5V272" stroke="#FF0000" stroke-width="3.6" fill="none" stroke-linejoin="round" stroke-linecap="round"/>
<path d="M472.5 222V247.5" stroke="#FF0000" stroke-width="3.6" fill="none" stroke-linejoin="round" stroke-linecap="round"/>
<path d="M506.5 236.5L511.5 242.5" stroke="#FF0000" stroke-width="1.3" fill="none" stroke-linejoin="round" stroke-linecap="round"/>
<g opacity="0.08"><path d="M369.87 63.8V382.4M381.90 63.8V382.4M393.93 63.8V382.4M405.96 63.8V382.4M417.99 63.8V382.4M430.02 63.8V382.4M442.05 63.8V382.4M454.08 63.8V382.4M466.11 63.8V382.4M478.14 63.8V382.4M490.17 63.8V382.4M502.20 63.8V382.4M514.23 63.8V382.4M526.26 63.8V382.4M538.29 63.8V382.4M550.32 63.8V382.4M562.35 63.8V382.4M574.38 63.8V382.4M586.41 63.8V382.4M598.44 63.8V382.4M610.47 63.8V382.4M622.50 63.8V382.4M634.53 63.8V382.4M646.56 63.8V382.4" stroke="#fff" stroke-opacity="0.31" stroke-width="1" fill="none"/><path d="M370 68.35H658.4M370 80.38H658.4M370 92.41H658.4M370 104.44H658.4M370 116.47H658.4M370 128.50H658.4M370 140.53H658.4M370 152.56H658.4M370 164.59H658.4M370 176.62H658.4M370 188.65H658.4M370 200.68H658.4M370 212.71H658.4M370 224.74H658.4M370 236.77H658.4M370 248.80H658.4M370 260.83H658.4M370 272.86H658.4M370 284.89H658.4M370 296.92H658.4M370 308.95H658.4M370 320.98H658.4M370 333.01H658.4M370 345.04H658.4M370 357.07H658.4M370 369.10H658.4M370 381.13H658.4" stroke="#fff" stroke-opacity="0.31" stroke-width="1" fill="none"/></g>
<rect x="467" y="153" width="6" height="8" fill="#1818F0" stroke="#C8A070" stroke-width="0.8"/>
<rect x="481" y="153" width="6" height="8" fill="#1818F0" stroke="#C8A070" stroke-width="0.8"/>
<rect x="516" y="153" width="6.5" height="8" fill="#1818F0" stroke="#C8A070" stroke-width="0.8"/>
<rect x="531" y="153" width="6.5" height="8" fill="#1818F0" stroke="#C8A070" stroke-width="0.8"/>
<rect x="455" y="174" width="6" height="11" fill="#1818F0" stroke="#C8A070" stroke-width="0.8"/>
<rect x="471" y="174" width="6.5" height="11" fill="#1818F0" stroke="#C8A070" stroke-width="0.8"/>
<rect x="454.5" y="222.5" width="6.699999999999989" height="10.0" fill="#1818F0" stroke="#C8A070" stroke-width="0.8"/>
<rect x="468.8" y="222.5" width="6.699999999999989" height="10.0" fill="#1818F0" stroke="#C8A070" stroke-width="0.8"/>
<rect x="530" y="222.5" width="7.5" height="10.0" fill="#1818F0" stroke="#C8A070" stroke-width="0.8"/>
<rect x="545" y="222.5" width="6.2000000000000455" height="10.0" fill="#1818F0" stroke="#C8A070" stroke-width="0.8"/>
<rect x="490" y="246.8" width="10" height="10.0" fill="#1818F0" stroke="#C8A070" stroke-width="0.8"/>
<rect x="505" y="246.8" width="10" height="10.0" fill="#1818F0" stroke="#C8A070" stroke-width="0.8"/>
<rect x="490" y="262" width="10" height="6.5" fill="#1818F0" stroke="#C8A070" stroke-width="0.8"/>
<rect x="505" y="262" width="10" height="6.5" fill="#1818F0" stroke="#C8A070" stroke-width="0.8"/>
<rect x="460" y="307.4" width="8" height="9.600000000000023" fill="#1818F0" stroke="#C8A070" stroke-width="0.8"/>
<rect x="474.3" y="307.4" width="7.899999999999977" height="9.600000000000023" fill="#1818F0" stroke="#C8A070" stroke-width="0.8"/>
<rect x="487" y="307.4" width="7.800000000000011" height="9.600000000000023" fill="#1818F0" stroke="#C8A070" stroke-width="0.8"/>
<rect x="501.2" y="307.4" width="7.800000000000011" height="9.600000000000023" fill="#1818F0" stroke="#C8A070" stroke-width="0.8"/>
<rect x="524.9" y="307.4" width="7.899999999999977" height="9.600000000000023" fill="#1818F0" stroke="#C8A070" stroke-width="0.8"/>
<rect x="539.1" y="307.4" width="7.899999999999977" height="9.600000000000023" fill="#1818F0" stroke="#C8A070" stroke-width="0.8"/>
<text x="473" y="160.5" font-size="8" fill="#92922C">C4</text>
<text x="521.5" y="160.5" font-size="8" fill="#92922C">C1</text>
<text x="460.5" y="183.6" font-size="9" fill="#92922C">R6</text>
<text x="460" y="231.3" font-size="9" fill="#92922C">R2</text>
<text x="536" y="231.3" font-size="9" fill="#92922C">R3</text>
<text x="489.5" y="279.8" font-size="10.5" fill="#92922C">R4</text>
<text x="508" y="279.8" font-size="9" fill="#92922C">J</text>
<text x="465.5" y="315.8" font-size="9" fill="#92922C">R5</text>
<text x="493" y="315.8" font-size="9" fill="#92922C">R2</text>
<text x="530.5" y="315.8" font-size="9" fill="#92922C">R8</text>
<path d="M468.3 63V88M531 63V88" stroke="#FFFF00" stroke-width="0.9" fill="none"/>
<path d="M468.3 113V117.5H477M489 117.5H531V113" stroke="#FFFF00" stroke-width="0.9" fill="none"/>
<rect x="448.2" y="128.2" width="47.8" height="23.6" fill="none" stroke="#FFFF00" stroke-width="1"/>
<rect x="508.2" y="128.2" width="48.4" height="23.6" fill="none" stroke="#FFFF00" stroke-width="1"/>
<circle cx="452.8" cy="132.8" r="3" fill="none" stroke="#FFFF00" stroke-width="0.9"/><path d="M450.7 134.9L454.9 130.7" stroke="#FFFF00" stroke-width="0.9"/>
<circle cx="552" cy="147.3" r="3" fill="none" stroke="#FFFF00" stroke-width="0.9"/><path d="M549.9 149.4L554.1 145.2" stroke="#FFFF00" stroke-width="0.9"/>
<path d="M490 168.8V262.5H515V168.8Z" stroke="#FFFF00" stroke-width="1" fill="none"/>
<path d="M499.5 262.5A3 3 0 0 1 505.5 262.5" stroke="#FFFF00" stroke-width="0.9" fill="none"/>
<circle cx="458.75" cy="206.3" r="13.6" fill="none" stroke="#FFFF00" stroke-width="1"/>
<circle cx="547.5" cy="206.3" r="13.6" fill="none" stroke="#FFFF00" stroke-width="1"/>
<circle cx="522.7" cy="299.5" r="12.6" fill="none" stroke="#FFFF00" stroke-width="1"/>
<circle cx="553.3" cy="299.5" r="12.6" fill="none" stroke="#FFFF00" stroke-width="1"/>
<path d="M545.5 226.3H549.5M547.5 224.3V228.3" stroke="#FFFF00" stroke-width="1" fill="none"/>
<path d="M556 291.6H560M558 289.6V293.6" stroke="#FFFF00" stroke-width="1" fill="none"/>
<path d="M436.4 265.8H471.2" stroke="#FFFF00" stroke-width="1" fill="none"/>
<path d="M436.6 266L443.7 273.6L450.8 266Z" fill="#FFFF00"/><path d="M457 266L464 273.6L471 266Z" fill="#FFFF00"/>
<path d="M443.7 256.5V266M463.2 256.5V266M443.7 273.6V285M464 273.6V285" stroke="#FFFF00" stroke-width="0.9" fill="none"/>
<path d="M439 274H448M459.5 274H468.5" stroke="#FFFF00" stroke-width="0.9" fill="none"/>
<path d="M528.8 260.6H542.6M528.8 266.2H542.6M535.6 256.5V260.6M535.6 266.2V270.5" stroke="#FFFF00" stroke-width="1" fill="none"/>
<rect x="440.5" y="319.4" width="70.8" height="11.8" fill="none" stroke="#CDB77F" stroke-width="1.5"/>
<rect x="524.9" y="319.4" width="23.8" height="11.8" fill="none" stroke="#FFFF00" stroke-width="1"/>
<text x="454.6" y="119.2" font-size="10" fill="#FFFF00" transform="rotate(-90 454.6 119.2)">J1</text>
<text x="474.5" y="138.8" font-size="11" fill="#FFFF00">RT1</text>
<text x="522.5" y="138.8" font-size="11" fill="#FFFF00">RT2</text>
<text x="497" y="197.5" font-size="10.5" fill="#FFFF00">U1</text>
<text x="465" y="208.8" font-size="10.5" fill="#FFFF00">L2</text>
<text x="528.3" y="208.8" font-size="10.5" fill="#FFFF00">L1</text>
<text x="543.5" y="267.6" font-size="10.5" fill="#FFFF00">C2</text>
<text x="548" y="285.4" font-size="10.5" fill="#FFFF00">C3</text>
<text x="417.3" y="287" font-size="10" fill="#FFFF00">DZ2</text>
<text x="466.3" y="287" font-size="10" fill="#FFFF00">DZ1</text>
<text x="473" y="341.6" font-size="11" fill="#FFFF00">P2</text>
<text x="530.8" y="344.8" font-size="11" fill="#FFFF00">P1</text>
<rect x="459.7" y="89" width="18" height="23.4" rx="9" ry="9.5" fill="#D3CCD3"/><circle cx="468.7" cy="100.6" r="4.1" fill="#1F8F8F"/>
<text x="467.59999999999997" y="102.2" font-size="4" fill="#9FD">0</text>
<rect x="520" y="89" width="18" height="23.4" rx="9" ry="9.5" fill="#D3CCD3"/><circle cx="529" cy="100.6" r="4.1" fill="#1F8F8F"/>
<text x="527.9" y="102.2" font-size="4" fill="#9FD">0</text>
<circle cx="483" cy="113.3" r="5.2" fill="#CBC7CD"/><circle cx="483" cy="113.3" r="1.9" fill="#1F8F8F"/>
<circle cx="494.7" cy="113.3" r="3.6" fill="#CBC7CD"/><circle cx="494.7" cy="113.3" r="1.8" fill="#1F8F8F"/>
<circle cx="503.8" cy="113.3" r="3.6" fill="#CBC7CD"/><circle cx="503.8" cy="113.3" r="1.8" fill="#1F8F8F"/>
<rect x="511.0" y="108.0" width="9" height="9" fill="#CBC7CD"/><circle cx="515.5" cy="112.5" r="1.9" fill="#1F8F8F"/>
<rect x="456.0" y="135.5" width="9" height="9" fill="#CBC7CD"/><circle cx="460.5" cy="140" r="1.9" fill="#1F8F8F"/>
<circle cx="472.5" cy="140" r="4.6" fill="#CBC7CD"/><circle cx="472.5" cy="140" r="1.9" fill="#1F8F8F"/>
<circle cx="484.5" cy="140" r="4.6" fill="#CBC7CD"/><circle cx="484.5" cy="140" r="1.9" fill="#1F8F8F"/>
<circle cx="501.75" cy="140" r="4.6" fill="#CBC7CD"/><circle cx="501.75" cy="140" r="1.9" fill="#1F8F8F"/>
<circle cx="520.5" cy="140" r="4.6" fill="#CBC7CD"/><circle cx="520.5" cy="140" r="1.9" fill="#1F8F8F"/>
<circle cx="532.5" cy="140" r="4.6" fill="#CBC7CD"/><circle cx="532.5" cy="140" r="1.9" fill="#1F8F8F"/>
<rect x="540.5" y="135.5" width="9" height="9" fill="#CBC7CD"/><circle cx="545" cy="140" r="1.9" fill="#1F8F8F"/>
<circle cx="485" cy="179.5" r="4.6" fill="#CBC7CD"/><circle cx="485" cy="179.5" r="1.9" fill="#1F8F8F"/>
<circle cx="521.25" cy="179.5" r="4.6" fill="#CBC7CD"/><circle cx="521.25" cy="179.5" r="1.9" fill="#1F8F8F"/>
<circle cx="485" cy="191.5" r="4.6" fill="#CBC7CD"/><circle cx="485" cy="191.5" r="1.9" fill="#1F8F8F"/>
<circle cx="521.25" cy="191.5" r="4.6" fill="#CBC7CD"/><circle cx="521.25" cy="191.5" r="1.9" fill="#1F8F8F"/>
<circle cx="485" cy="203.5" r="4.6" fill="#CBC7CD"/><circle cx="485" cy="203.5" r="1.9" fill="#1F8F8F"/>
<circle cx="521.25" cy="203.5" r="4.6" fill="#CBC7CD"/><circle cx="521.25" cy="203.5" r="1.9" fill="#1F8F8F"/>
<circle cx="485" cy="215.5" r="4.6" fill="#CBC7CD"/><circle cx="485" cy="215.5" r="1.9" fill="#1F8F8F"/>
<circle cx="521.25" cy="215.5" r="4.6" fill="#CBC7CD"/><circle cx="521.25" cy="215.5" r="1.9" fill="#1F8F8F"/>
<circle cx="485" cy="227.5" r="4.6" fill="#CBC7CD"/><circle cx="485" cy="227.5" r="1.9" fill="#1F8F8F"/>
<circle cx="521.25" cy="227.5" r="4.6" fill="#CBC7CD"/><circle cx="521.25" cy="227.5" r="1.9" fill="#1F8F8F"/>
<circle cx="485" cy="239.5" r="4.6" fill="#CBC7CD"/><circle cx="485" cy="239.5" r="1.9" fill="#1F8F8F"/>
<circle cx="521.25" cy="239.5" r="4.6" fill="#CBC7CD"/><circle cx="521.25" cy="239.5" r="1.9" fill="#1F8F8F"/>
<circle cx="485" cy="251.6" r="4.6" fill="#CBC7CD"/><circle cx="485" cy="251.6" r="1.9" fill="#1F8F8F"/>
<rect x="516.75" y="247.1" width="9" height="9" fill="#CBC7CD"/><circle cx="521.25" cy="251.6" r="1.9" fill="#1F8F8F"/>
<circle cx="501.75" cy="179.5" r="4.6" fill="#CBC7CD"/><circle cx="501.75" cy="179.5" r="1.9" fill="#1F8F8F"/>
<circle cx="509.25" cy="227.5" r="4.6" fill="#CBC7CD"/><circle cx="509.25" cy="227.5" r="1.9" fill="#1F8F8F"/>
<circle cx="533.75" cy="179.5" r="4.6" fill="#CBC7CD"/><circle cx="533.75" cy="179.5" r="1.9" fill="#1F8F8F"/>
<circle cx="558.25" cy="179.5" r="4.6" fill="#CBC7CD"/><circle cx="558.25" cy="179.5" r="1.9" fill="#1F8F8F"/>
<rect x="454.25" y="196.0" width="9" height="9" fill="#CBC7CD"/><circle cx="458.75" cy="200.5" r="1.9" fill="#1F8F8F"/>
<circle cx="458.75" cy="212.5" r="4.6" fill="#CBC7CD"/><circle cx="458.75" cy="212.5" r="1.9" fill="#1F8F8F"/>
<circle cx="547.5" cy="200.5" r="4.6" fill="#CBC7CD"/><circle cx="547.5" cy="200.5" r="1.9" fill="#1F8F8F"/>
<rect x="543.0" y="208.0" width="9" height="9" fill="#CBC7CD"/><circle cx="547.5" cy="212.5" r="1.9" fill="#1F8F8F"/>
<circle cx="472.5" cy="217" r="4.6" fill="#CBC7CD"/><circle cx="472.5" cy="217" r="1.9" fill="#1F8F8F"/>
<circle cx="453.75" cy="239.5" r="4.6" fill="#CBC7CD"/><circle cx="453.75" cy="239.5" r="1.9" fill="#1F8F8F"/>
<rect x="439.25" y="247.2" width="9" height="9" fill="#CBC7CD"/><circle cx="443.75" cy="251.7" r="1.9" fill="#1F8F8F"/>
<rect x="458.5" y="247.2" width="9" height="9" fill="#CBC7CD"/><circle cx="463" cy="251.7" r="1.9" fill="#1F8F8F"/>
<circle cx="472.5" cy="251.7" r="4.6" fill="#CBC7CD"/><circle cx="472.5" cy="251.7" r="1.9" fill="#1F8F8F"/>
<circle cx="535.5" cy="251.7" r="4.6" fill="#CBC7CD"/><circle cx="535.5" cy="251.7" r="1.9" fill="#1F8F8F"/>
<circle cx="454.4" cy="272" r="4" fill="#CBC7CD"/><circle cx="454.4" cy="272" r="1.9" fill="#1F8F8F"/>
<circle cx="444.3" cy="289" r="4.6" fill="#CBC7CD"/><circle cx="444.3" cy="289" r="1.9" fill="#1F8F8F"/>
<circle cx="463.2" cy="289" r="4.6" fill="#CBC7CD"/><circle cx="463.2" cy="289" r="1.9" fill="#1F8F8F"/>
<circle cx="509" cy="275.8" r="4.6" fill="#CBC7CD"/><circle cx="509" cy="275.8" r="1.9" fill="#1F8F8F"/>
<circle cx="535.3" cy="274.5" r="4.6" fill="#CBC7CD"/><circle cx="535.3" cy="274.5" r="1.9" fill="#1F8F8F"/>
<circle cx="516.3" cy="299.5" r="4.6" fill="#CBC7CD"/><circle cx="516.3" cy="299.5" r="1.9" fill="#1F8F8F"/>
<rect x="524.5" y="295.0" width="9" height="9" fill="#CBC7CD"/><circle cx="529" cy="299.5" r="1.9" fill="#1F8F8F"/>
<circle cx="547" cy="299.5" r="4.6" fill="#CBC7CD"/><circle cx="547" cy="299.5" r="1.9" fill="#1F8F8F"/>
<rect x="555.2" y="295.0" width="9" height="9" fill="#CBC7CD"/><circle cx="559.7" cy="299.5" r="1.9" fill="#1F8F8F"/>
<rect x="442.2" y="321.09999999999997" width="8.6" height="8.6" fill="#CBC7CD"/><circle cx="446.5" cy="325.4" r="1.9" fill="#1F8F8F"/>
<circle cx="458.5" cy="325.4" r="4.4" fill="#CBC7CD"/><circle cx="458.5" cy="325.4" r="1.9" fill="#1F8F8F"/>
<circle cx="470.2" cy="325.4" r="4.4" fill="#CBC7CD"/><circle cx="470.2" cy="325.4" r="1.9" fill="#1F8F8F"/>
<circle cx="482.2" cy="325.4" r="4.4" fill="#CBC7CD"/><circle cx="482.2" cy="325.4" r="1.9" fill="#1F8F8F"/>
<circle cx="493.9" cy="325.4" r="4.4" fill="#CBC7CD"/><circle cx="493.9" cy="325.4" r="1.9" fill="#1F8F8F"/>
<circle cx="505.3" cy="325.4" r="4.4" fill="#CBC7CD"/><circle cx="505.3" cy="325.4" r="1.9" fill="#1F8F8F"/>
<circle cx="530.3" cy="325.4" r="4.4" fill="#CBC7CD"/><circle cx="530.3" cy="325.4" r="1.9" fill="#1F8F8F"/>
<rect x="538.6" y="321.09999999999997" width="8.6" height="8.6" fill="#CBC7CD"/><circle cx="542.9" cy="325.4" r="1.9" fill="#1F8F8F"/>
<circle cx="436.5" cy="80.9" r="16.2" fill="#FFFF10"/>
<circle cx="447.50" cy="80.90" r="4.5" fill="#00F522"/>
<circle cx="444.28" cy="88.68" r="4.5" fill="#00F522"/>
<circle cx="436.50" cy="91.90" r="4.5" fill="#00F522"/>
<circle cx="428.72" cy="88.68" r="4.5" fill="#00F522"/>
<circle cx="425.50" cy="80.90" r="4.5" fill="#00F522"/>
<circle cx="428.72" cy="73.12" r="4.5" fill="#00F522"/>
<circle cx="436.50" cy="69.90" r="4.5" fill="#00F522"/>
<circle cx="444.28" cy="73.12" r="4.5" fill="#00F522"/>
<circle cx="436.5" cy="80.9" r="10.5" fill="#00F522"/>
<circle cx="436.5" cy="80.9" r="6.6" fill="#1A9494"/>
<text x="435.4" y="82.4" font-size="4" fill="#8EE">2</text>
<circle cx="561.8" cy="80.9" r="16.2" fill="#FFFF10"/>
<circle cx="572.80" cy="80.90" r="4.5" fill="#00F522"/>
<circle cx="569.58" cy="88.68" r="4.5" fill="#00F522"/>
<circle cx="561.80" cy="91.90" r="4.5" fill="#00F522"/>
<circle cx="554.02" cy="88.68" r="4.5" fill="#00F522"/>
<circle cx="550.80" cy="80.90" r="4.5" fill="#00F522"/>
<circle cx="554.02" cy="73.12" r="4.5" fill="#00F522"/>
<circle cx="561.80" cy="69.90" r="4.5" fill="#00F522"/>
<circle cx="569.58" cy="73.12" r="4.5" fill="#00F522"/>
<circle cx="561.8" cy="80.9" r="10.5" fill="#00F522"/>
<circle cx="561.8" cy="80.9" r="6.6" fill="#1A9494"/>
<text x="560.6999999999999" y="82.4" font-size="4" fill="#8EE">2</text>
<circle cx="436.5" cy="356.4" r="16.2" fill="#FFFF10"/>
<circle cx="447.50" cy="356.40" r="4.5" fill="#00F522"/>
<circle cx="444.28" cy="364.18" r="4.5" fill="#00F522"/>
<circle cx="436.50" cy="367.40" r="4.5" fill="#00F522"/>
<circle cx="428.72" cy="364.18" r="4.5" fill="#00F522"/>
<circle cx="425.50" cy="356.40" r="4.5" fill="#00F522"/>
<circle cx="428.72" cy="348.62" r="4.5" fill="#00F522"/>
<circle cx="436.50" cy="345.40" r="4.5" fill="#00F522"/>
<circle cx="444.28" cy="348.62" r="4.5" fill="#00F522"/>
<circle cx="436.5" cy="356.4" r="10.5" fill="#00F522"/>
<circle cx="436.5" cy="356.4" r="6.6" fill="#1A9494"/>
<text x="435.4" y="357.9" font-size="4" fill="#8EE">2</text>
<circle cx="562.6" cy="356.4" r="16.2" fill="#FFFF10"/>
<circle cx="573.60" cy="356.40" r="4.5" fill="#00F522"/>
<circle cx="570.38" cy="364.18" r="4.5" fill="#00F522"/>
<circle cx="562.60" cy="367.40" r="4.5" fill="#00F522"/>
<circle cx="554.82" cy="364.18" r="4.5" fill="#00F522"/>
<circle cx="551.60" cy="356.40" r="4.5" fill="#00F522"/>
<circle cx="554.82" cy="348.62" r="4.5" fill="#00F522"/>
<circle cx="562.60" cy="345.40" r="4.5" fill="#00F522"/>
<circle cx="570.38" cy="348.62" r="4.5" fill="#00F522"/>
<circle cx="562.6" cy="356.4" r="10.5" fill="#00F522"/>
<circle cx="562.6" cy="356.4" r="6.6" fill="#1A9494"/>
<text x="561.5" y="357.9" font-size="4" fill="#8EE">2</text>
</g></svg>
<div class="a" style="left:658.4px;top:63.8px;width:8.2px;height:318.6px;background:#FEFEFC"></div>
<div class="a" style="left:658.8px;top:64.2px;width:7.4px;height:7.6px;background:#C4D4FA;border-radius:1.5px"></div>
<div class="a" style="left:658.8px;top:374.2px;width:7.4px;height:7.6px;background:#C4D4FA;border-radius:1.5px"></div>
<div class="a" style="left:341.4px;top:382.4px;width:317px;height:7.8px;background:#FEFEFC"></div>
<div class="a" style="left:341.6px;top:382.8px;width:7.6px;height:7.2px;background:#C4D4FA;border-radius:1.5px"></div>
<div class="a" style="left:650.6px;top:382.8px;width:7.6px;height:7.2px;background:#C4D4FA;border-radius:1.5px"></div>
<div class="a" style="left:352px;top:383.5px;width:9px;height:6px;background:#D0DCF8;border-radius:1px"></div>
<svg width="680" height="411" viewBox="0 0 680 411"><path d="M660.6 69.5L662.5 67L664.4 69.5M660.6 376.6L662.5 379.1L664.4 376.6M346.6 384.6L344.4 386.4L346.6 388.2M653.4 384.6L655.6 386.4L653.4 388.2" stroke="#3C5AA8" stroke-width="1.2" fill="none"/></svg>
<div class="a" style="left:658.4px;top:382.4px;width:9px;height:8px;background:#ECE9D8"></div>
<div class="a" style="left:340.6px;top:390.3px;width:326px;height:0.7px;background:#8F8D80"></div>
<div class="a" style="left:342px;top:392px;width:13.4px;height:8px;background:#0000F0;border:0.6px solid #333"></div>
<div class="a" style="left:356.2px;top:392px;width:8.6px;height:8px;background:#F4F2E8;border:0.6px solid #777"></div><div class="t" style="left:357.6px;top:392.6px;font-size:4.6px;color:#444">LS</div>
<svg width="680" height="411" viewBox="0 0 680 411"><path d="M369.5 390.6L371.5 400.6H402L404.5 390.6M404.5 390.6L407 400.6H448.5L451 390.6M451 390.6L453.5 400.6H490.5L493 390.6M493 390.6L495.5 400.6H531L533.5 390.6M533.5 390.6L536 400.6H577L579.5 390.6M579.5 390.6L582 400.6H625" fill="none" stroke="#6A685E" stroke-width="0.7"/><path d="M404.5 390.6L407 400.6H448.5L451 390.6Z" fill="#FBFAF5" stroke="#333" stroke-width="0.8"/></svg>
<div class="a" style="left:371.5px;top:393.6px;width:4px;height:4px;background:#E81010;border:0.4px solid #444"></div>
<div class="t" style="left:377.8px;top:392.3px;font-size:5px;color:#222;">Top Layer</div>
<div class="a" style="left:406.5px;top:393.6px;width:4px;height:4px;background:#1010D0;border:0.4px solid #444"></div>
<div class="t" style="left:412.8px;top:392.3px;font-size:5px;color:#222;font-weight:bold;">Bottom Layer</div>
<div class="a" style="left:454px;top:393.6px;width:4px;height:4px;background:#E020E0;border:0.4px solid #444"></div>
<div class="t" style="left:460.3px;top:392.3px;font-size:5px;color:#222;">Mechanical 1</div>
<div class="a" style="left:495.5px;top:393.6px;width:4px;height:4px;background:#F0F020;border:0.4px solid #444"></div>
<div class="t" style="left:501.8px;top:392.3px;font-size:5px;color:#222;">Top Overlay</div>
<div class="a" style="left:538px;top:393.6px;width:4px;height:4px;background:#8A8A10;border:0.4px solid #444"></div>
<div class="t" style="left:544.3px;top:392.3px;font-size:5px;color:#222;">Bottom Overlay</div>
<div class="a" style="left:584px;top:393.6px;width:4px;height:4px;background:#888;border:0.4px solid #444"></div>
<div class="t" style="left:590.3px;top:392.3px;font-size:5px;color:#222;">Top Paste</div><div class="a" style="left:666.8px;top:46px;width:13.2px;height:345px;background:#ECE9D8"></div>
<div class="a" style="left:668px;top:48.5px;width:10px;height:19.5px;background:#F1EFE3;border:0.6px solid #D2CFC0;border-left:none;border-radius:0 2px 2px 0"></div>
<div class="vt" style="left:676.8px;top:50.8px;font-size:5.4px">偏好的</div>
<div class="a" style="left:668px;top:70px;width:10px;height:37.5px;background:#F1EFE3;border:0.6px solid #D2CFC0;border-left:none;border-radius:0 2px 2px 0"></div>
<div class="vt" style="left:676.8px;top:72.3px;font-size:5.3px">SCH Inspector</div>
<div class="a" style="left:668px;top:108.5px;width:10px;height:29px;background:#F1EFE3;border:0.6px solid #D2CFC0;border-left:none;border-radius:0 2px 2px 0"></div>
<div class="vt" style="left:676.8px;top:110.8px;font-size:5.7px">方块电路</div>
<div class="a" style="left:668px;top:138.3px;width:10px;height:24px;background:#F1EFE3;border:0.6px solid #D2CFC0;border-left:none;border-radius:0 2px 2px 0"></div>
<div class="vt" style="left:676.8px;top:140.60000000000002px;font-size:4.9px">SCH List</div>
<div class="a" style="left:668px;top:162.8px;width:10px;height:10px;background:#F1EFE3;border:0.6px solid #D2CFC0;border-left:none;border-radius:0 2px 2px 0"></div>
<div class="vt" style="left:676.8px;top:165.10000000000002px;font-size:5.5px">库</div>
<div class="a" style="left:0;top:401.6px;width:680px;height:9.4px;background:#ECE9D8;border-top:0.7px solid #FAF9F3"></div>
<div class="a" style="left:0;top:401.2px;width:680px;height:0.6px;background:#C9C6B7"></div>
<div class="t" style="left:2.5px;top:403px;font-size:5.3px;color:#222">X:380 Y:760&nbsp;&nbsp;&nbsp; Grid:10</div>
<div class="a" style="left:173px;top:403px;width:0.7px;height:7px;background:#C9C6B7"></div>
<div class="a" style="left:345px;top:403px;width:0.7px;height:7px;background:#C9C6B7"></div>
<div class="a" style="left:605px;top:403px;width:0.7px;height:7px;background:#C9C6B7"></div>
<div class="t" style="left:490.5px;top:403.2px;font-size:5px;color:#555">System</div>
<div class="a" style="left:507px;top:402.8px;width:95px;height:8.2px;background:linear-gradient(#5E96EE,#2E6CDE);border-radius:2px"></div>
<div class="t" style="left:512.5px;top:403.4px;font-size:5px;color:#DDF8DD">▼</div>
<div class="a" style="left:47.1px;top:24.5px;width:94.2px;height:238.6px;background:rgba(90,88,78,0.35)"></div>
<div class="a" style="left:45.6px;top:23px;width:94.2px;height:238.6px;background:#FBFAF6;border:0.7px solid #8E8B7E;overflow:hidden">
<div class="a" style="left:0;top:0;width:10.6px;height:240px;background:linear-gradient(90deg,#F7F6F0,#EAE7DB)"></div>
<div class="mi" style="left:13.3px;top:1.200000000000001px;color:#111">新建<span class="m">&nbsp;&nbsp;(<u>N</u>)</span></div>
<div class="mi" style="left:87.2px;top:1.500000000000001px;font-size:4.2px">▶</div>
<div class="mi" style="left:13.3px;top:10.799999999999999px;color:#111">打开<span class="m">(O)</span><span class="m">&nbsp;&nbsp;(<u>O</u>)...</span></div>
<div class="mi m" style="left:63.999999999999986px;top:11.399999999999999px;">Ctrl+O</div>
<div class="mi" style="left:13.3px;top:20.199999999999996px;color:#111">导入<span class="m">(I)</span><span class="m">&nbsp;&nbsp;(<u>I</u>)</span></div>
<div class="mi" style="left:87.2px;top:20.499999999999996px;font-size:4.2px">▶</div>
<div class="mi" style="left:13.3px;top:30.5px;color:#111">关闭<span class="m">(C)</span><span class="m">&nbsp;&nbsp;(<u>C</u>)</span></div>
<div class="mi m" style="left:60.99999999999999px;top:31.1px;">Ctrl+F4</div>
<div class="mi" style="left:13.3px;top:43.300000000000004px;color:#111">打开工程<span class="m">(J)</span><span class="m">&nbsp;&nbsp;(<u>J</u>)...</span></div>
<div class="mi" style="left:13.3px;top:53.1px;color:#111">打开设计工作区<span class="m">(K)</span><span class="m">&nbsp;&nbsp;(<u>K</u>)...</span></div>
<div class="mi" style="left:13.3px;top:65.30000000000001px;color:#111">保存<span class="m">(S)</span><span class="m">&nbsp;&nbsp;(<u>S</u>)</span></div>
<div class="mi m" style="left:63.999999999999986px;top:65.9px;">Ctrl+S</div>
<div class="mi" style="left:13.3px;top:75.0px;color:#111">保存为<span class="m">(A)</span><span class="m">&nbsp;&nbsp;(<u>A</u>)...</span></div>
<div class="mi" style="left:13.3px;top:85.0px;color:#111">保存拷贝为<span class="m">(Y)</span><span class="m">&nbsp;&nbsp;(<u>Y</u>)...</span></div>
<div class="mi" style="left:13.3px;top:94.60000000000001px;color:#A5A296">全部保存<span class="m">(L)</span><span class="m">&nbsp;&nbsp;(<u>L</u>)</span></div>
<div class="mi" style="left:13.3px;top:107.4px;color:#111">保存工程为<span class="m">...</span></div>
<div class="mi" style="left:13.3px;top:117.0px;color:#111">保存设计工作区为<span class="m">...</span></div>
<div class="a" style="left:0.6px;top:128.8px;width:91.60000000000001px;height:9.4px;background:#C1D2EE;border:0.7px solid #3A66B4"></div>
<div class="mi" style="left:13.3px;top:129.4px;color:#111">页面设计<span class="m">(U)</span><span class="m">&nbsp;&nbsp;(<u>U</u>)...</span></div>
<div class="mi" style="left:13.3px;top:139.0px;color:#111">打印预览<span class="m">(V)</span><span class="m">&nbsp;&nbsp;(<u>V</u>)...</span></div>
<div class="mi" style="left:13.3px;top:148.9px;color:#111">打印<span class="m">(P)</span><span class="m">&nbsp;&nbsp;(<u>P</u>)...</span></div>
<div class="mi m" style="left:63.999999999999986px;top:149.5px;">Ctrl+P</div>
<div class="mi" style="left:13.3px;top:158.8px;color:#111">缺省打印<span class="m">(T)</span><span class="m">&nbsp;&nbsp;(<u>T</u>)...</span></div>
<div class="mi" style="left:13.3px;top:171.20000000000002px;color:#111">智能<span class="m">&nbsp;PDF</span><span class="m">(m)</span><span class="m">&nbsp;&nbsp;(<u>M</u>)...</span></div>
<div class="mi" style="left:13.3px;top:183.70000000000002px;color:#111">导入向导</div>
<div class="mi" style="left:13.3px;top:195.8px;color:#111">最近的文件<span class="m">(R)</span><span class="m">&nbsp;&nbsp;(<u>R</u>)</span></div>
<div class="mi" style="left:87.2px;top:196.10000000000002px;font-size:4.2px">▶</div>
<div class="mi" style="left:13.3px;top:205.8px;color:#111">最近的工程</div>
<div class="mi" style="left:87.2px;top:206.10000000000002px;font-size:4.2px">▶</div>
<div class="mi" style="left:13.3px;top:215.6px;color:#111">最近的设计工作区</div>
<div class="mi" style="left:87.2px;top:215.9px;font-size:4.2px">▶</div>
<div class="mi" style="left:13.3px;top:227.6px;color:#111">退出<span class="m">(x)</span><span class="m">&nbsp;&nbsp;(<u>X</u>)</span></div>
<div class="mi m" style="left:63.999999999999986px;top:228.2px;">Alt+F4</div>
<div class="sep" style="left:13.5px;width:78.7px;top:41.2px"></div>
<div class="sep" style="left:13.5px;width:78.7px;top:63.099999999999994px"></div>
<div class="sep" style="left:13.5px;width:78.7px;top:104.9px"></div>
<div class="sep" style="left:13.5px;width:78.7px;top:126.80000000000001px"></div>
<div class="sep" style="left:13.5px;width:78.7px;top:169.0px"></div>
<div class="sep" style="left:13.5px;width:78.7px;top:181.5px"></div>
<div class="sep" style="left:13.5px;width:78.7px;top:194.1px"></div>
<div class="sep" style="left:13.5px;width:78.7px;top:226.0px"></div>
<svg width="12" height="240" viewBox="0 0 12 240" style="left:0;top:0"><path d="M2.2 18.2V12.799999999999999H4.4L5.1 13.599999999999998H7.8V18.2Z" fill="#E8B94A" stroke="#B58A30" stroke-width="0.5"/><path d="M2.2 18.2L3.6 14.999999999999998H9.2L7.8 18.2Z" fill="#FCE9AE" stroke="#C59A3A" stroke-width="0.5"/></svg>
<svg width="12" height="240" viewBox="0 0 12 240" style="left:0;top:0"><path d="M2.2 50.7V45.300000000000004H4.4L5.1 46.10000000000001H7.8V50.7Z" fill="#E8B94A" stroke="#B58A30" stroke-width="0.5"/><path d="M2.2 50.7L3.6 47.50000000000001H9.2L7.8 50.7Z" fill="#FCE9AE" stroke="#C59A3A" stroke-width="0.5"/></svg>
<svg width="12" height="240" viewBox="0 0 12 240" style="left:0;top:0"><rect x="2.4" y="66.80000000000001" width="6" height="6.2" rx="0.6" fill="#5560C4" stroke="#3A4296" stroke-width="0.5"/><rect x="3.7" y="67.10000000000001" width="3.4" height="2.2" fill="#F2F4FB"/><rect x="3.9" y="70.9" width="3" height="2" fill="#C9CEEA"/></svg>
<div class="a" style="left:2.3px;top:140.9px;width:6px;height:5.4px;background:#E4E6EE;border:0.5px solid #8088A0;border-radius:50% 50% 0 0"></div>
<div class="a" style="left:2.3px;top:150.8px;width:6px;height:5.4px;background:#D8DCE8;border:0.5px solid #8088A0"></div>
<div class="a" style="left:2.3px;top:173.10000000000002px;width:6px;height:5.4px;background:#3A9A58;border-top:2px solid #D83828;border-right:2.5px solid #F4F4F4"></div>
</div>
<div class="a" style="left:520.5px;top:387.6px;white-space:nowrap;font-family:'Liberation Sans',sans-serif;font-weight:bold;font-size:23.5px;line-height:24px;color:rgba(222,222,220,0.66);-webkit-text-stroke:1.5px rgba(60,60,60,0.68);text-shadow:0 0 2px rgba(255,255,255,0.7);transform-origin:0 0;transform:scaleX(0.938)">GeekFans.com</div>
</body></html>
